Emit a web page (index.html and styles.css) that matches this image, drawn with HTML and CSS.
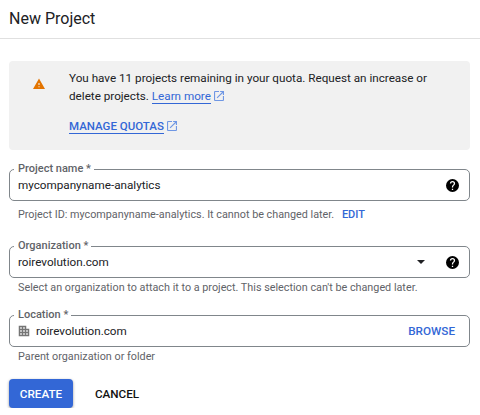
FILE: index.html
```html
<!DOCTYPE html>
<html lang="en">
  <head>
    <meta charset="UTF-8" />
    <title>New Project</title>
    <link rel="stylesheet" href="styles.css">
  </head>
  <body>
    <header class="top">
      <h1>New Project</h1>
    </header>

    <main class="content">
      <!-- Quota notice -->
      <section class="notice">
        <svg class="warn" width="12" height="12" viewBox="1 2 22 20"><path fill="#e37400" d="M1 21h22L12 2 1 21zm12-3h-2v-2h2v2zm0-4h-2v-4h2v4z"/></svg>
        <div class="notice_text">
          <p>You have 11 projects remaining in your quota. Request an increase or</p>
          <p>delete projects. <a class="link" href="#">Learn more</a><svg class="ext" width="10" height="10" viewBox="3 3 18 18"><path fill="#6f97e4" d="M19 19H5V5h7V3H5a2 2 0 0 0-2 2v14a2 2 0 0 0 2 2h14a2 2 0 0 0 2-2v-7h-2v7zM14 3v2h3.600l-9.800 9.800 1.400 1.400L19 6.400V10h2V3h-7z"/></svg></p>
          <p class="manage"><a class="link" href="#">MANAGE QUOTAS</a><svg class="ext" width="10" height="10" viewBox="3 3 18 18"><path fill="#6f97e4" d="M19 19H5V5h7V3H5a2 2 0 0 0-2 2v14a2 2 0 0 0 2 2h14a2 2 0 0 0 2-2v-7h-2v7zM14 3v2h3.600l-9.800 9.800 1.400 1.400L19 6.400V10h2V3h-7z"/></svg></p>
        </div>
      </section>

      <!-- Form fields -->
      <div class="field">
        <span class="label">Project name *</span>
        <span class="value">mycompanyname-analytics</span>
        <svg class="help" width="13" height="13" viewBox="2 2 20 20"><path fill="#000" d="M12 2a10 10 0 1 0 0 20 10 10 0 0 0 0-20zm1 17h-2v-2h2v2zm2.070-7.750-.9.920C13.450 12.900 13 13.500 13 15h-2v-.5c0-1.100.45-2.100 1.170-2.830l1.240-1.260A2 2 0 0 0 14 9a2 2 0 0 0-4 0H8a4 4 0 0 1 8 0c0 .88-.36 1.680-.93 2.250z"/></svg>
      </div>
      <p class="hint">Project ID: mycompanyname-analytics. It cannot be changed later. <a class="edit" href="#">EDIT</a></p>

      <div class="field field_org">
        <span class="label">Organization *</span>
        <span class="value">roirevolution.com</span>
        <span class="arrow"></span>
        <svg class="help" width="13" height="13" viewBox="2 2 20 20"><path fill="#000" d="M12 2a10 10 0 1 0 0 20 10 10 0 0 0 0-20zm1 17h-2v-2h2v2zm2.070-7.750-.9.920C13.450 12.900 13 13.500 13 15h-2v-.5c0-1.100.45-2.100 1.170-2.830l1.240-1.260A2 2 0 0 0 14 9a2 2 0 0 0-4 0H8a4 4 0 0 1 8 0c0 .88-.36 1.680-.93 2.250z"/></svg>
      </div>
      <p class="hint hint_org">Select an organization to attach it to a project. This selection can't be changed later.</p>

      <div class="field field_loc">
        <span class="label">Location *</span>
        <svg class="building" width="12" height="12" viewBox="0 0 16 16"><path fill="#757575" fill-rule="evenodd" d="M1 1h10v4h4v10H1V1zm2 2v2h2V3H3zm4 0v2h2V3H7zM3 7v2h2V7H3zm4 0v2h2V7H7zm4 0v2h2V7h-2zM3 11v2h2v-2H3zm4 0v2h2v-2H7zm4 0v2h2v-2h-2z"/></svg>
        <span class="value">roirevolution.com</span>
        <a class="browse" href="#">BROWSE</a>
      </div>
      <p class="hint hint_loc">Parent organization or folder</p>

      <div class="buttons">
        <button class="create">CREATE</button>
        <button class="cancel">CANCEL</button>
      </div>
    </main>
  </body>
</html>
```

FILE: styles.css
```css
* {
  margin: 0;
  padding: 0;
  box-sizing: border-box;
}

body {
  font-family: Roboto, sans-serif;
  font-size: 11.7px;
  color: #202124;
  background-color: white;
  overflow: hidden;
}

/* Header */
.top {
  height: 39px;
  padding: 0 9px;
  border-bottom: 1px solid #e0e0e0;
  display: flex;
  align-items: center;
}

h1 {
  font-size: 16px;
  font-weight: 400;
  margin-top: -2px;
}

.content {
  padding: 22px 10px 0 9px;
}

/* Quota notice */
.notice {
  height: 89px;
  background-color: #f1f1f1;
  border-radius: 4px;
  display: flex;
  padding: 8px 12px 0 24px;
}

.warn {
  margin-top: 9px;
  flex: none;
}

.notice_text {
  margin-left: 24px;
  line-height: 18px;
}

.link {
  color: #3367d6;
  text-decoration: none;
  border-bottom: 1px solid #3367d6;
}

.ext {
  margin-left: 3px;
  vertical-align: -1px;
}

.manage {
  margin-top: 12px;
  font-weight: 500;
  font-size: 11.5px;
}

/* Fields */
.field {
  position: relative;
  height: 32px;
  margin-top: 19px;
  border: 1px solid #80868b;
  border-radius: 5px;
  display: flex;
  align-items: center;
  padding: 0 8px;
}

.label {
  position: absolute;
  top: -9px;
  left: 4px;
  padding: 0 3px 0 4px;
  background-color: white;
  font-size: 11px;
  font-weight: 500;
  line-height: 16px;
  color: #5f6368;
}

.value {
  flex: 1;
}

.help {
  flex: none;
  margin-right: 2px;
}

.arrow {
  width: 0;
  height: 0;
  border-left: 4.5px solid transparent;
  border-right: 4.5px solid transparent;
  border-top: 4.5px solid #202124;
  margin-right: 21px;
}

.field_org {
  margin-top: 24px;
}

.field_loc {
  margin-top: 20px;
}

.building {
  margin-right: 6px;
  flex: none;
}

.browse {
  color: #3367d6;
  text-decoration: none;
  font-size: 11.7px;
  font-weight: 500;
  margin-right: 6px;
}

.hint {
  font-size: 10.8px;
  line-height: 14px;
  color: #5f6368;
  padding-left: 9px;
  margin-top: 7px;
}

.edit {
  color: #3367d6;
  text-decoration: none;
  font-size: 11px;
  font-weight: 500;
  margin-left: 5px;
}

.hint_org {
  margin-top: 3px;
}

.hint_loc {
  margin-top: 3px;
}

/* Buttons */
.buttons {
  display: flex;
  margin-top: 15px;
}

button {
  font-family: Roboto, sans-serif;
  font-size: 11.7px;
  font-weight: 500;
  height: 29px;
  border: none;
  border-radius: 4px;
}

.create {
  width: 64px;
  background-color: #3367d6;
  color: white;
  box-shadow: 0 1px 3px #00000066;
}

.cancel {
  width: 66px;
  margin-left: 11px;
  background-color: transparent;
  color: #111;
}
```
